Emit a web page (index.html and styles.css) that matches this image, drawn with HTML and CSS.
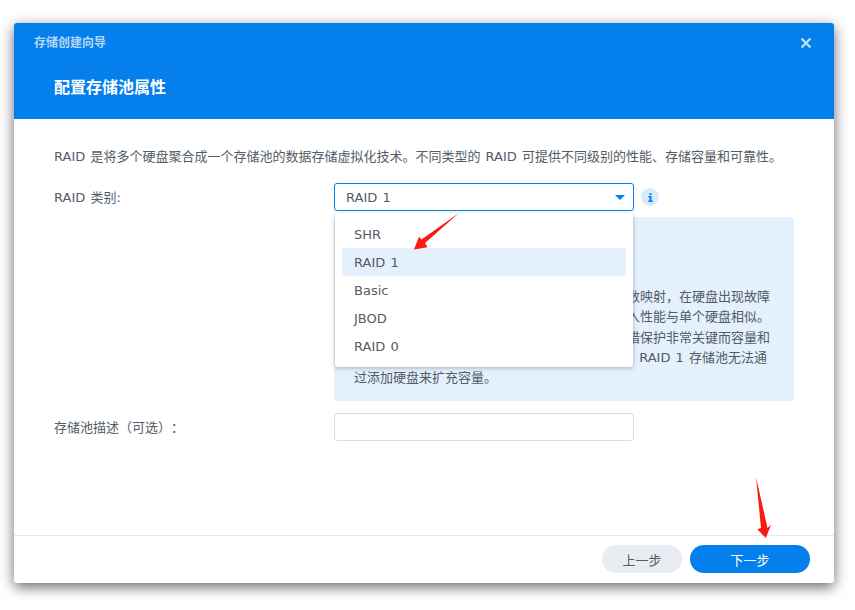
FILE: index.html
```html
<!DOCTYPE html>
<html lang="zh-CN">
<head>
<meta charset="utf-8">
<title>存储创建向导</title>
<link rel="stylesheet" href="styles.css">
</head>
<body>
<div class="dialog">
  <header class="head">
    <div class="head-top">
      <span class="wizard">存储创建向导</span>
      <svg class="close" width="12" height="12" viewBox="0 0 12 12"><path d="M1.5 1.5l9 9M10.500 1.500l-9 9" stroke="#c4e0fa" stroke-width="2.2" fill="none"/></svg>
    </div>
    <h1 class="title">配置存储池属性</h1>
  </header>
  <main class="body">
    <p class="intro">RAID 是将多个硬盘聚合成一个存储池的数据存储虚拟化技术。不同类型的 RAID 可提供不同级别的性能、存储容量和可靠性。</p>
    <div class="row row-raid">
      <label class="label">RAID 类别:</label>
      <div class="field-wrap">
        <div class="select">
          <span>RAID 1</span>
          <svg class="caret" width="10" height="5" viewBox="0 0 10 5"><path d="M0 0h10L5 5z" fill="#057feb"/></svg>
        </div>
        <ul class="menu">
          <li>SHR</li>
          <li class="active">RAID 1</li>
          <li>Basic</li>
          <li>JBOD</li>
          <li>RAID 0</li>
        </ul>
      </div>
      <span class="info"><svg width="7" height="9" viewBox="0 0 8 10"><path d="M2.800 0h2.400v2H2.800zM1.500 3.400h3.700v4.900h1.300V10h-5V8.300h1.300V5.100H1.500z" fill="#057feb"/></svg></span>
    </div>
    <div class="row row-note">
      <div class="note">
        <div class="note-line">数映射，在硬盘出现故障</div>
        <div class="note-line">入性能与单个硬盘相似。</div>
        <div class="note-line">措保护非常关键而容量和</div>
        <div class="note-line note-line-latin">RAID 1 存储池无法通</div>
        <div>过添加硬盘来扩充容量。</div>
      </div>
    </div>
    <div class="row row-desc">
      <label class="label">存储池描述（可选）：</label>
      <div class="input"></div>
    </div>
  </main>
  <footer class="foot">
    <button class="btn btn-prev">上一步</button>
    <button class="btn btn-next">下一步</button>
  </footer>
</div>
<svg class="arrows" width="855" height="610" viewBox="0 0 855 610">
  <path d="M459 213L425 243 427.500 247.300 414 249.500 419 236.700 421.500 239.500z" fill="#fb1a12"/>
  <path d="M756 477L767.500 528 771 525 765.800 538 757.300 529.300 761 528z" fill="#fb1a12"/>
</svg>
</body>
</html>
```
FILE: styles.css
```css
* { box-sizing: border-box; }
html, body { margin: 0; height: 100%; background: #fff; overflow: hidden; }
body {
  padding: 23px 21px 27px 14px;
  font-family: "DejaVu Sans", "Noto Sans CJK SC", sans-serif;
  font-size: 13px;
  word-spacing: 1px;
  color: #525c66;
  text-spacing-trim: space-all;
}
.dialog {
  width: 820px;
  height: 560px;
  background: #fff;
  border-radius: 3px;
  box-shadow: 0 4px 14px rgba(0, 0, 0, .6);
  display: flex;
  flex-direction: column;
}
.head {
  height: 96px;
  flex: none;
  background: #057feb;
  border-radius: 3px 3px 0 0;
  padding: 11px 22px 0 20px;
}
.head-top { display: flex; justify-content: space-between; align-items: center; height: 18px; }
.wizard { font-size: 12px; font-weight: 700; color: #b4d8f9; line-height: 18px; }
.title { margin: 24px 0 0 20px; font-size: 16px; line-height: 24px; font-weight: 700; color: #fff; }
.body { flex: 1; padding: 28px 40px 0; min-height: 0; }
.intro { margin: 0; line-height: 20px; white-space: nowrap; }
.row { display: flex; }
.row-raid { margin-top: 16px; height: 28px; align-items: center; }
.label { width: 280px; flex: none; line-height: 20px; padding-top: 1px; }
.field-wrap { position: relative; width: 300px; }
.select {
  height: 28px;
  border: 1px solid #057feb;
  border-radius: 3px;
  display: flex;
  align-items: center;
  justify-content: space-between;
  padding: 1px 8px 0 11px;
}
.caret { display: block; }
.menu {
  position: absolute;
  left: 1px;
  top: 30px;
  z-index: 2;
  width: 298px;
  height: 154px;
  margin: 0;
  padding: 7px;
  list-style: none;
  background: #fff;
  border-radius: 3px;
  box-shadow: 0 1px 4px rgba(60, 90, 120, .4);
}
.menu li { height: 28px; line-height: 30px; padding-left: 12px; border-radius: 3px; }
.menu li.active { background: #e4f0fc; }
.info {
  width: 18px;
  height: 18px;
  margin-left: 7px;
  border-radius: 50%;
  background: #d9eafb;
  display: flex;
  align-items: center;
  justify-content: center;
}
.row-note { margin-top: 6px; padding-left: 280px; }
.note {
  width: 460px;
  height: 184px;
  background: #e4f0fc;
  border-radius: 4px;
  padding: 70.200px 24px 0 20px;
  line-height: 20.300px;
  white-space: nowrap;
}
.note-line { text-align: right; }
.note-line-latin { padding-right: 3px; }
.row-desc { margin-top: 12px; align-items: center; height: 28px; }
.input { width: 300px; height: 28px; border: 1px solid #d5dee7; border-radius: 3px; background: #fff; }
.foot {
  height: 48px;
  flex: none;
  border-top: 1px solid #e6e6e6;
  display: flex;
  justify-content: flex-end;
  gap: 8px;
  padding: 9px 24px 0 0;
}
.btn {
  height: 28px;
  border: 0;
  border-radius: 14px;
  font: inherit;
  padding: 0;
}
.btn-prev { width: 80px; background: #e8edf4; color: #525c66; }
.btn-next { width: 120px; background: #057feb; color: #fff; }
.arrows { position: absolute; left: 0; top: 0; z-index: 5; pointer-events: none; }
```
